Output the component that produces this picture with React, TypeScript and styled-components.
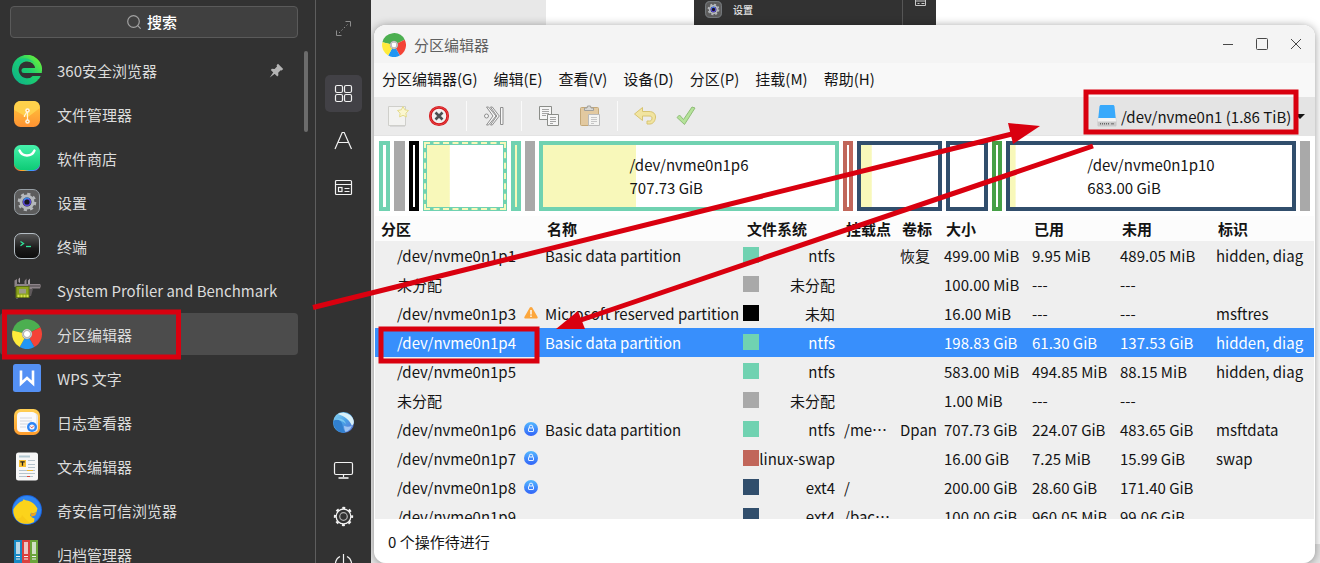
import React from "react";
import styled, { createGlobalStyle, css } from "styled-components";

const Global = createGlobalStyle`
  * { box-sizing: border-box; }
  html, body { margin: 0; padding: 0; overflow: hidden; }
  body, button, input, select {
    font-family: "Noto Sans CJK SC", "Noto Sans", sans-serif;
    font-size: 15px;
  }
  button, input, select { border: 0; background: none; padding: 0; margin: 0; color: inherit; }
  svg { display: block; flex: none; }
`;

/* ---------- colours of the file systems ---------- */
const NTFS = "#70d2b1";
const FREE = "#a9a9a9";
const UNKNOWN = "#000000";
const SWAP = "#c1665a";
const EXT4 = "#314e6c";
const FAT = "#46a046";
const USED = "#f8f8ba";

/* ---------- desktop ---------- */
const Desktop = styled.div`
  position: relative;
  display: flex;
  height: 100vh;
  overflow: hidden;
  background: #fff;
`;
const Workspace = styled.main`
  position: relative;
  flex: 1;
  min-width: 0;
  display: flex;
  flex-direction: column;
  padding: 25px 5px 0 3px;
`;
const BackPane = styled.div`
  position: absolute;
  top: 0;
  left: 0;
  width: 175px;
  height: 100%;
  background: #e8e8e8;
`;
const BackFooter = styled.div`
  position: absolute;
  right: 0;
  bottom: 0;
  width: 40px;
  height: 19px;
  background: #e4e4e4;
`;
const BackWindow = styled.div`
  position: absolute;
  top: 0;
  left: 323px;
  width: 242px;
  height: 26px;
  display: flex;
  background: #323232;
  color: #e2e2e2;
  font-size: 10px;
  font-weight: 500;
  line-height: 20px;
`;
const BackWindowMain = styled.div`
  display: flex;
  gap: 10px;
  width: 209px;
  padding-left: 10px;
  border-right: 1px solid #565656;
`;
const BackWindowRail = styled.div`
  padding-left: 12px;
`;

/* ---------- launcher ---------- */
const Launcher = styled.aside`
  position: relative;
  z-index: 1;
  flex: none;
  display: flex;
  width: 371px;
  overflow: hidden;
  background: #323232;
  color: #dcdcdc;
`;
const LauncherShade = styled.div`
  flex: none;
  width: 0;
  box-shadow: 0 0 5px 3px rgba(0, 0, 0, 0.28);
`;
const LauncherMain = styled.div`
  width: 316px;
  padding-top: 6px;
  border-right: 1px solid #5e5e5e;
`;
const Search = styled.label`
  display: flex;
  align-items: center;
  justify-content: center;
  gap: 6px;
  height: 32px;
  margin: 0 17px 0 10px;
  border: 1px solid #5a5a5a;
  border-radius: 4px;
  background: #404040;
  input {
    width: 34px;
    height: 24px;
    padding-bottom: 2px;
    color: #fff;
    font-weight: 500;
    outline: none;
  }
  input::placeholder { color: #fff; opacity: 1; }
`;
const AppArea = styled.div`
  display: flex;
  align-items: flex-start;
  gap: 6px;
  padding-top: 10px;
`;
const AppList = styled.ul`
  list-style: none;
  margin: 0;
  padding: 0;
  width: 298px;
`;
const AppItem = styled.li`
  padding: 1px 0;
`;
const AppEntry = styled.button<{ $active?: boolean }>`
  display: flex;
  align-items: center;
  gap: 15px;
  width: 100%;
  height: 42px;
  padding: 0 14px 0 12px;
  border-radius: 4px;
  text-align: left;
  background: ${(p) => (p.$active ? "#4c4c4c" : "transparent")};
`;
const AppLabel = styled.span`
  flex: 1;
  line-height: 22px;
  padding-top: 2px;
`;
const ScrollThumb = styled.div`
  width: 4px;
  height: 81px;
  margin-top: 3px;
  border-radius: 2px;
  background: #6c6c6c;
`;
const Rail = styled.nav`
  display: flex;
  flex-direction: column;
  align-items: center;
  gap: 10px;
  width: 55px;
  padding-top: 10px;
`;
const RailButton = styled.button<{ $active?: boolean; $after?: number }>`
  flex: none;
  display: flex;
  align-items: center;
  justify-content: center;
  width: 37px;
  height: 37px;
  border-radius: 5px;
  margin-bottom: ${(p) => p.$after ?? 0}px;
  background: ${(p) => (p.$active ? "#424146" : "transparent")};
`;

/* ---------- editor window ---------- */
const EditorWindow = styled.section`
  position: relative;
  flex: 1;
  min-height: 0;
  display: flex;
  flex-direction: column;
  overflow: hidden;
  border-radius: 12px;
  background: #fff;
  color: #141414;
`;
const WindowShadow = styled.div`
  position: relative;
  flex: 1;
  min-height: 0;
  display: flex;
  flex-direction: column;
  border-radius: 12px;
  box-shadow: 0 1px 10px rgba(0, 0, 0, 0.4);
`;
const TitleBar = styled.header`
  flex: none;
  display: flex;
  align-items: center;
  gap: 8px;
  height: 38px;
  padding: 2px 8px 0;
  background: #f4f4f4;
  h1 {
    flex: 1;
    margin: 0;
    padding-bottom: 2px;
    font-size: 15px;
    font-weight: 400;
    color: #606060;
  }
`;
const WindowButtons = styled.div`
  display: flex;
  gap: 12px;
  padding-bottom: 2px;
`;
const WindowButton = styled.button`
  display: flex;
  align-items: center;
  justify-content: center;
  width: 22px;
  height: 22px;
`;
const MenuBar = styled.nav`
  flex: none;
  display: flex;
  align-items: center;
  height: 34px;
  padding-bottom: 2px;
  background: #f8f8f8;
`;
const MenuItem = styled.button`
  padding: 0 8px;
  line-height: 22px;
  white-space: nowrap;
`;
const ToolBar = styled.div`
  flex: none;
  display: flex;
  align-items: center;
  height: 39px;
  padding-left: 3px;
  border-bottom: 1px solid #e4e4e4;
  background: #ebebeb;
`;
const Tool = styled.button`
  display: flex;
  align-items: center;
  justify-content: center;
  width: 41px;
  height: 34px;
`;
const Divider = styled.span`
  width: 1px;
  height: 30px;
  margin: 0 6px 0 7px;
  background: #fafafa;
`;
const DevicePicker = styled.label`
  display: flex;
  align-items: center;
  gap: 4px;
  width: 228px;
  height: 100%;
  margin-left: auto;
  padding: 0 10px 0 10px;
  background: #e4e4e4;
  select {
    appearance: none;
    width: 170px;
    height: 26px;
    outline: none;
  }
`;

/* ---------- disk map ---------- */
const DiskMap = styled.div<{ $cols: string }>`
  flex: none;
  display: grid;
  grid-template-columns: ${(p) => p.$cols};
  gap: 4px;
  height: 80px;
  padding: 5px;
`;
const Part = styled.div<{ $c: string; $solid?: boolean; $used: number; $dashed?: boolean }>`
  position: relative;
  display: flex;
  align-items: center;
  justify-content: center;
  border: 4px solid ${(p) => p.$c};
  line-height: 23px;
  white-space: nowrap;
  background: linear-gradient(${USED}, ${USED}) 0 0 / ${(p) => p.$used}% 100% no-repeat
    ${(p) => (p.$solid ? p.$c : "#fff")};
  ${(p) =>
    p.$dashed &&
    css`
      &::after {
        content: "";
        position: absolute;
        inset: -3px;
        border: 2px dashed ${USED};
      }
    `}
`;

/* ---------- partition table ---------- */
const ListPane = styled.div`
  flex: 1;
  min-height: 0;
  overflow: hidden;
  margin: 0 1px;
  background: #efefef;
`;
const PartTable = styled.table`
  width: 100%;
  table-layout: fixed;
  border-collapse: collapse;
  white-space: nowrap;
  th {
    height: 25px;
    padding: 0 0 0 4px;
    background: #fcfcfc;
    text-align: left;
    font-weight: 700;
    line-height: 22px;
  }
  th:first-child { padding-left: 6px; }
  td {
    height: 29px;
    padding: 0 0 0 2px;
    line-height: 22px;
  }
`;
const PartRow = styled.tr<{ $selected?: boolean }>`
  background: ${(p) => (p.$selected ? "#388ffc" : "transparent")};
  color: ${(p) => (p.$selected ? "#ffffff" : "inherit")};
`;
const PathCell = styled.div`
  display: flex;
  align-items: center;
  justify-content: space-between;
  height: 22px;
  padding: 0 5px 0 20px;
  svg { margin-bottom: 2px; }
`;
const FsCell = styled.div`
  display: flex;
  align-items: center;
  justify-content: space-between;
  height: 22px;
  margin-left: -2px;
  padding-right: 7px;
`;
const Swatch = styled.span<{ $c: string }>`
  width: 16px;
  height: 16px;
  margin-bottom: 1px;
  background: ${(p) => p.$c};
`;
const StatusBar = styled.footer`
  flex: none;
  height: 44px;
  padding: 0 14px;
  line-height: 46px;
`;
const Annotations = styled.svg`
  position: absolute;
  z-index: 2;
  top: 0;
  left: 0;
  pointer-events: none;
`;

/* ---------- drawings ---------- */
const DiscIcon = ({ size }: { size: number }) => (
  <svg width={size} height={size} viewBox="0 0 30 30">
    <path d="M15 15 0.5 11.5A15 15 0 0 1 28.4 8.3Z" fill="#4caf50" />
    <path d="M15 15 28.4 8.3A15 15 0 0 1 22.3 28.1Z" fill="#f44336" />
    <path d="M15 15 22.3 28.1A15 15 0 0 1 7.7 28.1Z" fill="#2196f3" />
    <path d="M15 15 7.7 28.1A15 15 0 0 1 0.5 11.5Z" fill="#ffeb3b" />
    <circle cx="15" cy="15" r="5.2" fill="#9b9b9b" />
    <circle cx="15" cy="15" r="4.2" fill="none" stroke="#e0e0e0" strokeWidth="1" />
    <circle cx="15" cy="15" r="3" fill="#fff" />
  </svg>
);

const BrowserIcon = () => (
  <svg width="30" height="30" viewBox="0 0 30 30">
    <defs>
      <linearGradient id="b1" gradientUnits="userSpaceOnUse" x1="2" y1="26" x2="27" y2="3">
        <stop offset="0" stopColor="#0db38a" />
        <stop offset="0.55" stopColor="#1fcf6d" />
        <stop offset="1" stopColor="#6bf03a" />
      </linearGradient>
    </defs>
    <path d="M26.700 16A11.700 11.700 0 1 0 23.800 22.600" fill="none" stroke="url(#b1)" strokeWidth="6.600" />
    <path d="M3.500 7.500C8 2 17 1.500 22.500 8 17 4.500 9 5 5.500 13Z" fill="#12c48a" opacity=".7" />
    <path d="M12 13h17.800v5H12a2.500 2.500 0 0 1 0-5Z" fill="url(#b1)" />
    <path d="M20 18h10v3H19Z" fill="#323232" />
    <path d="M21 21h7.700l-1.800 3.200h-7Z" fill="#1fcf6d" />
  </svg>
);

const FilesIcon = () => (
  <svg width="30" height="30" viewBox="0 0 30 30">
    <defs>
      <linearGradient id="f1" x1="0" y1="0" x2="0" y2="1">
        <stop offset="0" stopColor="#ffc93c" />
        <stop offset="1" stopColor="#ff9232" />
      </linearGradient>
    </defs>
    <rect x="2" y="2" width="26" height="26" rx="6.500" fill="url(#f1)" />
    <path d="M2.200 11C2 4.500 4.500 2 9 2h12c4.500 0 7 2.500 6.800 7L17 17.300c-1.200.8-2.500.8-3.700 0Z" fill="#ffd34f" opacity=".85" />
    <path d="M15.500 11.500v11M15.500 12l-3.500 5.500M12.500 16v2" stroke="#fff2d8" strokeWidth="1.200" fill="none" />
    <circle cx="15.500" cy="11.500" r="2.300" fill="#fff6e6" />
    <circle cx="15.500" cy="22.500" r="2.300" fill="#fff6e6" />
    <circle cx="15.500" cy="11.500" r=".8" fill="#f0a030" />
    <circle cx="15.500" cy="22.500" r=".8" fill="#f0a030" />
  </svg>
);

const StoreIcon = () => (
  <svg width="30" height="30" viewBox="0 0 30 30">
    <defs>
      <linearGradient id="s1" x1="0" y1="0" x2="0" y2="1">
        <stop offset="0" stopColor="#46f2ac" />
        <stop offset="1" stopColor="#0ecb76" />
      </linearGradient>
      <linearGradient id="s2" x1="0" y1="0" x2="1" y2="0">
        <stop offset="0.1" stopColor="#ff6a3a" />
        <stop offset="0.35" stopColor="#ffb020" />
        <stop offset="0.6" stopColor="#2aa8ff" />
        <stop offset="1" stopColor="#8a5bff" />
      </linearGradient>
    </defs>
    <rect x="2" y="3" width="26" height="25" rx="6.500" fill="url(#s2)" />
    <rect x="2" y="2" width="26" height="25" rx="6.500" fill="url(#s1)" />
    <path d="M7.500 7.500c1.500 3.500 4.500 5 7.500 5s6-1.500 7.500-5" stroke="#fff" strokeWidth="2.400" strokeLinecap="round" fill="none" />
  </svg>
);

const SettingsIcon = ({ size = 30 }: { size?: number }) => (
  <svg width={size} height={size} viewBox="0 0 30 30">
    <rect x="2.500" y="2.500" width="25" height="25" rx="6.500" fill="#5c5c5c" stroke="#98a0a6" />
    <circle cx="15" cy="15" r="8" fill="none" stroke="#b4b7ba" strokeWidth="2.600" strokeDasharray="3.140 3.140" />
    <circle cx="15" cy="15" r="6" fill="#25252b" stroke="#b4b8bc" strokeWidth="3" />
    <circle cx="15" cy="15" r="3.400" fill="#17161f" stroke="#5a49d8" strokeWidth="1.600" />
    <path d="M11.800 13.500a3.600 3.600 0 0 1 5.500-1.700" stroke="#3a8ae0" strokeWidth="1.400" fill="none" />
  </svg>
);

const TerminalIcon = () => (
  <svg width="30" height="30" viewBox="0 0 30 30">
    <defs>
      <linearGradient id="t1" x1="0" y1="0" x2="0" y2="1">
        <stop offset="0" stopColor="#565656" />
        <stop offset="0.6" stopColor="#1a1a1a" />
        <stop offset="1" stopColor="#0c0c0c" />
      </linearGradient>
    </defs>
    <rect x="2.500" y="2.500" width="25" height="25" rx="6.500" fill="url(#t1)" stroke="#b4bdc4" />
    <path d="m8.500 10.500 3 2-3 2.200" stroke="#2fe59a" strokeWidth="1.300" fill="none" />
    <path d="M14 15.500h5" stroke="#2fe59a" strokeWidth="1.300" />
  </svg>
);

const ProfilerIcon = () => (
  <svg width="30" height="30" viewBox="0 0 30 30">
    <path d="M2.500 5.500 5 4v5h7.500V6l2-2.500V9h13.500l1 1.500-1 3h-8l-2 5h-2l-1-4H7l-1 9H4V12H2.500Z" fill="#8c8388" />
    <path d="M16 10h13v2H16Z" fill="#6b6468" />
    <path d="M6.500 7V4L8 2.500V8Zm9.500 2V5.500l2-2V9Z" fill="#a79fa4" />
    <path d="M17 14h4l-2 7h-2Z" fill="#5f595c" />
    <rect x="4" y="11.500" width="13" height="11" fill="#8aa31d" stroke="#5a6d10" />
    <rect x="7" y="14" width="7" height="4.500" fill="#9b9a86" />
    <path d="M5.500 21h2M8.500 21h2M11.500 21h2M14.500 21h2" stroke="#d5e04a" strokeWidth="2.500" />
  </svg>
);

const WriterIcon = () => (
  <svg width="30" height="30" viewBox="0 0 30 30">
    <rect x="1" y="1" width="28" height="28" rx="2.500" fill="#5490f4" />
    <path d="M9 7.500V20.500l6-5.500 6 5.500V7.500" stroke="#fff" strokeWidth="2.600" fill="none" strokeLinejoin="miter" />
  </svg>
);

const LogIcon = () => (
  <svg width="30" height="30" viewBox="0 0 30 30">
    <defs>
      <linearGradient id="l1" x1="0" y1="0" x2="0" y2="1">
        <stop offset="0" stopColor="#ffd055" />
        <stop offset="1" stopColor="#ff9c2c" />
      </linearGradient>
    </defs>
    <rect x="2" y="2" width="26" height="26" rx="6.500" fill="url(#l1)" />
    <rect x="8" y="6" width="18" height="19" rx="4" fill="#e7e7ea" />
    <rect x="5" y="5" width="19" height="20" rx="4" fill="#fafafc" />
    <path d="M8 11h12M8 14h12M8 17h8M8 20h6" stroke="#d4d6dc" strokeWidth="1" />
    <circle cx="20" cy="20" r="5" fill="#2e86f7" />
    <circle cx="20" cy="20" r="2.600" fill="#eef4ff" />
    <path d="m18.500 19.500 1.300 1.400 2-2.200" stroke="#e85a4a" strokeWidth="1" fill="none" />
  </svg>
);

const TextIcon = () => (
  <svg width="30" height="30" viewBox="0 0 30 30">
    <rect x="4" y="1.500" width="22" height="28" rx="2.500" fill="#f7f7f7" />
    <path d="M16 9.500h7M16 13.500h7M16 16.500h7M7 19.500h16M7 22.500h16M7 25.500h14" stroke="#b5c3cc" strokeWidth="1" />
    <path d="M7 5.500h11" stroke="#b3c9d3" strokeWidth="2" />
    <path d="M15 19.500h6" stroke="#f0b92c" />
    <path d="M15 25.500h3" stroke="#d84a40" />
    <rect x="7" y="9" width="7" height="7" fill="#f7bf33" />
    <path d="M8.300 10.800h4.400M10.500 10.800v4" stroke="#222" strokeWidth="1.300" />
  </svg>
);

const LeopardIcon = () => (
  <svg width="30" height="30" viewBox="0 0 30 30">
    <circle cx="15" cy="15" r="15" fill="#1c62dc" />
    <circle cx="15" cy="15" r="14" fill="#2f86f2" />
    <path d="M1.500 14C4 10 7 7 10.500 6l1-1.700 2 1c3.500.2 7.500 2.200 9.500 4.700l2.500 3.500-1 3.500c-2 1.500-4 1-5.500.8l-.8 2.700c1 1.500 2.500 2.500 4.300 3l-.5 3.500C15 30.500 6 29 3 22.500 1.600 20 1 17 1.500 14Z" fill="#fcd31b" />
    <path d="M19 18c2 .5 4 .3 5.800-.8l-1.600 3.300-4 1.200Z" fill="#f4a516" />
    <path d="M10 20c2 3 5 5 8 8-6 1.500-12-2-14-5 2 1 5 1 6-3Z" fill="#f8c917" />
  </svg>
);

const ArchiveIcon = () => (
  <svg width="30" height="30" viewBox="0 0 30 30">
    <rect x="2" y="1" width="8" height="28" fill="#1789c4" />
    <rect x="10" y="1" width="8" height="28" fill="#d9403e" />
    <rect x="18" y="1" width="8" height="28" fill="#6ba43a" />
    <path d="M4 3h4v12H4ZM12 3h4v12h-4ZM20 3h4v12h-4Z" fill="#f3f3f3" opacity=".75" />
    <path d="M4 17.500h4M12 17.500h4M20 17.500h4M4 20h4M12 20h4M20 20h4" stroke="#f3f3f3" strokeWidth="1" />
  </svg>
);

const PinIcon = () => (
  <svg width="15" height="15" viewBox="0 0 15 15">
    <path d="M9 .8 14.200 6 12.600 7.500l-.9-.2-2.500 2.500.2 2.500-1.100 1.100L1.800 6.900l1.100-1.100 2.700.1L8 3.500l-.4-1.300ZM4.300 9.200l1.500 1.500L.8 14.500Z" fill="#b4b4b4" />
  </svg>
);

const line = { fill: "none", stroke: "#f2f2f2", strokeWidth: 1.2 } as const;

const ExpandIcon = () => (
  <svg width="15" height="15" viewBox="0 0 15 15" fill="none" stroke="#8d8d8d">
    <path d="M9.500 .5h5v5M.5 9.500v5h5" />
    <path d="M3 12 12.500 2.500" strokeDasharray="1.500 2" />
  </svg>
);
const GridIcon = () => (
  <svg width="19" height="19" viewBox="0 0 19 19" {...line}>
    <rect x="1.500" y="1.500" width="7" height="7" rx="1.500" />
    <rect x="10.500" y="1.500" width="7" height="7" rx="1.500" />
    <rect x="1.500" y="10.500" width="7" height="7" rx="1.500" />
    <rect x="10.500" y="10.500" width="7" height="7" rx="1.500" />
  </svg>
);
const LetterIcon = () => (
  <svg width="19" height="19" viewBox="0 0 19 19" {...line}>
    <path d="M1 18 8.200 1.500h2L17.500 18M4.500 11.500h9.500" />
  </svg>
);
const CardIcon = () => (
  <svg width="19" height="19" viewBox="0 0 19 19" {...line}>
    <rect x="1.500" y="2.500" width="16" height="14" rx="1" />
    <path d="M1.500 6.500h16M10.500 10.500h5M10.500 13.500h5" />
    <rect x="4.500" y="9.500" width="3.500" height="4" />
  </svg>
);
const GlobeIcon = () => (
  <svg width="21" height="21" viewBox="0 0 20 20">
    <defs>
      <linearGradient id="g1" x1="0" y1="0" x2="1" y2="1">
        <stop offset="0" stopColor="#8fd8f2" />
        <stop offset="0.5" stopColor="#4aa0e6" />
        <stop offset="1" stopColor="#5b6bd0" />
      </linearGradient>
    </defs>
    <circle cx="10" cy="10" r="10" fill="url(#g1)" />
    <path d="M4.500 1.800C12-1.500 18.500 3 19.700 8c.5 2.500-.5 4.500-1.700 5-2-5-6.500-9-13.500-11.200Z" fill="#d9f0f8" />
    <path d="M.2 8.500C4.500 6 8 8 9 12c.5 3 1 5 3 7.600C5 20.500-.3 15 .2 8.500Z" fill="#3180cf" />
    <path d="M2 7c5-2 9 0 10.500 4.500C9.500 8.500 6 7.500 2 7Z" fill="#7cc8f0" />
    <path d="M10.500 13c3 1.500 5 1 7.500 0-1 3-3 5-6 6-1-1.500-1.500-4-1.500-6Z" fill="#9ec4f2" />
  </svg>
);
const MonitorIcon = () => (
  <svg width="21" height="18" viewBox="0 0 21 18" {...line}>
    <rect x="1.500" y="1.500" width="18" height="12" rx="1.500" />
    <path d="M10.500 13.500V16" />
    <path d="M5.500 17h10" strokeWidth="1.600" />
  </svg>
);
const GearIcon = () => (
  <svg width="21" height="21" viewBox="0 0 20 20" {...line}>
    <circle cx="10" cy="10" r="8.200" strokeWidth="2" strokeDasharray="2.800 3.640" strokeDashoffset="1.400" />
    <circle cx="10" cy="10" r="7" />
    <circle cx="10" cy="10" r="3.600" stroke="#b0b0b0" />
  </svg>
);
const PowerIcon = () => (
  <svg width="19" height="19" viewBox="0 0 19 19" {...line}>
    <path d="M9.500 0v9M6 2.500a8 8 0 1 0 7 0" />
  </svg>
);

const NewIcon = () => (
  <svg width="24" height="24" viewBox="0 0 24 24">
    <path d="M2.500 2.500h17v19h-17Z" fill="#f3f3f1" stroke="#cfcfcb" />
    <path d="M4 22.500h15" stroke="#d8d8d8" />
    <path d="m17 2.500 1.800 3.300 3.700.7-2.600 2.700.5 3.700-3.400-1.600-3.400 1.600.5-3.700-2.600-2.700 3.800-.7Z" fill="#fbf7d0" stroke="#e5dc8c" strokeLinejoin="round" />
  </svg>
);
const DeleteIcon = () => (
  <svg width="22" height="22" viewBox="0 0 22 22">
    <circle cx="11" cy="11" r="8.700" fill="#f0f0f0" stroke="#d4181c" strokeWidth="2.800" />
    <circle cx="11" cy="11" r="8.900" fill="none" stroke="#f06060" strokeWidth=".6" />
    <path d="m7.500 7.500 7 7m0-7-7 7" stroke="#4c5052" strokeWidth="2.600" />
  </svg>
);
const ResizeIcon = () => (
  <svg width="22" height="22" viewBox="0 0 22 22" fill="#f7f7f7" stroke="#8f8f8f">
    <circle cx="3.500" cy="11" r="2" />
    <path d="M3.500 2h2l7.500 9-7.500 9h-2L10 11Z" />
    <path d="M17.500 2.500h2.500v17h-2.500Z" />
    <path d="M7.500 2h1.800l7 9-7 9H7.500l6.300-9Z" />
  </svg>
);
const CopyIcon = () => (
  <svg width="22" height="22" viewBox="0 0 22 22" fill="#f6f6f6" stroke="#8b8d89">
    <path d="M1.500 1.500h12v13h-12Z" />
    <path d="M4 4.500h7M4 6.500h7M4 8.500h7M4 10.500h4" stroke="#a4a4a4" />
    <path d="M9.500 9.500h11v11h-11Z" />
    <path d="M12 12.500h6M12 14.500h6M12 16.500h6M12 18.500h3" stroke="#a4a4a4" />
  </svg>
);
const PasteIcon = () => (
  <svg width="22" height="22" viewBox="0 0 22 22">
    <rect x="1.500" y="2.500" width="18" height="18" rx="1" fill="#e2c9a0" stroke="#c4a878" />
    <path d="M5.500 5.500V3H8l.5-2h3l.5 2h2.500v2.500Z" fill="#d8d8d6" stroke="#a0a09c" />
    <path d="M9.500 9.500h11v11h-11Z" fill="#f4f4f2" stroke="#bababa" />
    <path d="M12 12.500h6M12 14.500h6M12 16.500h6M12 18.500h3" stroke="#c6c6c6" />
  </svg>
);
const UndoIcon = () => (
  <svg width="24" height="20" viewBox="0 0 24 20">
    <path d="M1.500 8 9.500 1.500v4H16c4.500 0 6.500 2.500 6.500 5.500S20.500 18 17 18h-3v-3h2.500c2 0 2.500-1.500 2.500-3s-1-2-3-2H9.500v4.500Z" fill="#f1e4a0" stroke="#d8c470" strokeLinejoin="round" />
  </svg>
);
const ApplyIcon = () => (
  <svg width="22" height="22" viewBox="0 0 22 22">
    <path d="m2 12.500 2.500-2.500 4 4.500L17 2l3 1L9.500 19.500Z" fill="#b5e39a" stroke="#90bd78" strokeLinejoin="round" />
  </svg>
);
const DriveIcon = () => (
  <svg width="20" height="22" viewBox="0 0 20 22">
    <path d="M1.300 12.500h17.400l.8 3.500v4c0 .8-.5 1.200-1.200 1.200H1.700C1 21.200.500 20.800.500 20v-4Z" fill="#f3f3f3" stroke="#cfcfcf" strokeWidth=".6" />
    <path d="M.7 16.500h18.600v3.700c0 .6-.4 1-1 1H1.700c-.6 0-1-.4-1-1Z" fill="#c9c9c9" />
    <path d="M2.500 1.500C2.600.6 3.200 0 4 0h12c.8 0 1.400.6 1.500 1.500L18.700 13H1.300Z" fill="#38a9fb" />
    <path d="M3 18.800h9" stroke="#666" strokeWidth="1.400" strokeDasharray="1 1" />
    <path d="M14 18.800h3" stroke="#888" strokeWidth="1.600" />
  </svg>
);
const WarnIcon = () => (
  <svg width="14" height="14" viewBox="0 0 14 14">
    <path d="M5.800 1.600c.5-.9 1.900-.9 2.400 0l5.400 9.300c.4.800-.1 1.600-1 1.600H1.400c-.9 0-1.400-.8-1-1.600Z" fill="#fca63c" />
    <path d="M7 4v4.500M7 9.500V11" stroke="#fff" strokeWidth="1.400" />
  </svg>
);
const LockIcon = () => (
  <svg width="14" height="14" viewBox="0 0 14 14">
    <defs>
      <linearGradient id="k1" x1="0" y1="0" x2="0" y2="1">
        <stop offset="0" stopColor="#54b8ff" />
        <stop offset="1" stopColor="#3163f8" />
      </linearGradient>
    </defs>
    <circle cx="7" cy="7" r="7" fill="url(#k1)" />
    <rect x="4.500" y="6" width="5" height="3.500" rx=".5" fill="none" stroke="#fff" strokeWidth=".9" />
    <path d="M5.300 6V4.800a1.700 1.700 0 0 1 3.400 0V6" fill="none" stroke="#fff" strokeWidth=".9" />
  </svg>
);

/* ---------- data ---------- */
const apps: { name: string; icon: React.ReactNode; pinned?: boolean; active?: boolean }[] = [
  { name: "360安全浏览器", icon: <BrowserIcon />, pinned: true },
  { name: "文件管理器", icon: <FilesIcon /> },
  { name: "软件商店", icon: <StoreIcon /> },
  { name: "设置", icon: <SettingsIcon /> },
  { name: "终端", icon: <TerminalIcon /> },
  { name: "System Profiler and Benchmark", icon: <ProfilerIcon /> },
  { name: "分区编辑器", icon: <DiscIcon size={30} />, active: true },
  { name: "WPS 文字", icon: <WriterIcon /> },
  { name: "日志查看器", icon: <LogIcon /> },
  { name: "文本编辑器", icon: <TextIcon /> },
  { name: "奇安信可信浏览器", icon: <LeopardIcon /> },
  { name: "归档管理器", icon: <ArchiveIcon /> },
];

const menus = ["分区编辑器(G)", "编辑(E)", "查看(V)", "设备(D)", "分区(P)", "挂载(M)", "帮助(H)"];

const parts: { w: number; c: string; solid?: boolean; used?: number; dashed?: boolean; label?: [string, string] }[] = [
  { w: 11, c: NTFS },
  { w: 11, c: FREE, solid: true },
  { w: 10, c: UNKNOWN },
  { w: 84, c: NTFS, used: 30, dashed: true },
  { w: 10, c: NTFS, used: 100 },
  { w: 10, c: FREE, solid: true },
  { w: 300, c: NTFS, used: 32, label: ["/dev/nvme0n1p6", "707.73 GiB"] },
  { w: 10, c: SWAP },
  { w: 85, c: EXT4, used: 14 },
  { w: 42, c: EXT4 },
  { w: 10, c: FAT },
  { w: 290, c: EXT4, used: 2, label: ["/dev/nvme0n1p10", "683.00 GiB"] },
  { w: 10, c: FREE, solid: true },
];
const partColumns = parts.map((p) => `minmax(0, ${p.w}fr)`).join(" ");

const columns: [string, number | undefined][] = [
  ["分区", 168],
  ["名称", 200],
  ["文件系统", 99],
  ["挂载点", 56],
  ["卷标", 44],
  ["大小", 88],
  ["已用", 88],
  ["未用", 96],
  ["标识", undefined],
];

type Row = {
  path: string; mark?: "warn" | "lock"; name?: string; color: string; fs: string; mount?: string;
  label?: string; size: string; used: string; free: string; flags?: string; selected?: boolean;
};
const rows: Row[] = [
  { path: "/dev/nvme0n1p1", name: "Basic data partition", color: NTFS, fs: "ntfs", label: "恢复", size: "499.00 MiB", used: "9.95 MiB", free: "489.05 MiB", flags: "hidden, diag" },
  { path: "未分配", color: FREE, fs: "未分配", size: "100.00 MiB", used: "---", free: "---" },
  { path: "/dev/nvme0n1p3", mark: "warn", name: "Microsoft reserved partition", color: UNKNOWN, fs: "未知", size: "16.00 MiB", used: "---", free: "---", flags: "msftres" },
  { path: "/dev/nvme0n1p4", name: "Basic data partition", color: NTFS, fs: "ntfs", size: "198.83 GiB", used: "61.30 GiB", free: "137.53 GiB", flags: "hidden, diag", selected: true },
  { path: "/dev/nvme0n1p5", color: NTFS, fs: "ntfs", size: "583.00 MiB", used: "494.85 MiB", free: "88.15 MiB", flags: "hidden, diag" },
  { path: "未分配", color: FREE, fs: "未分配", size: "1.00 MiB", used: "---", free: "---" },
  { path: "/dev/nvme0n1p6", mark: "lock", name: "Basic data partition", color: NTFS, fs: "ntfs", mount: "/me⋯", label: "Dpan", size: "707.73 GiB", used: "224.07 GiB", free: "483.65 GiB", flags: "msftdata" },
  { path: "/dev/nvme0n1p7", mark: "lock", color: SWAP, fs: "linux-swap", size: "16.00 GiB", used: "7.25 MiB", free: "15.99 GiB", flags: "swap" },
  { path: "/dev/nvme0n1p8", mark: "lock", color: EXT4, fs: "ext4", mount: "/", size: "200.00 GiB", used: "28.60 GiB", free: "171.40 GiB" },
  { path: "/dev/nvme0n1p9", color: EXT4, fs: "ext4", mount: "/bac⋯", size: "100.00 GiB", used: "960.05 MiB", free: "99.06 GiB" },
];

export default function App() {
  return (
    <Desktop lang="zh-CN">
      <Global />
      <Launcher>
        <LauncherMain>
          <Search>
            <svg width="14" height="14" viewBox="0 0 14 14" fill="none" stroke="#a2a2a2" strokeWidth="1.200">
              <circle cx="6.500" cy="6.500" r="5.800" />
              <path d="m10.700 10.700 3 3" />
            </svg>
            <input type="text" placeholder="搜索" aria-label="搜索" />
          </Search>
          <AppArea>
            <AppList>
              {apps.map((a) => (
                <AppItem key={a.name}>
                  <AppEntry type="button" $active={a.active}>
                    {a.icon}
                    <AppLabel>{a.name}</AppLabel>
                    {a.pinned && <PinIcon />}
                  </AppEntry>
                </AppItem>
              ))}
            </AppList>
            <ScrollThumb />
          </AppArea>
        </LauncherMain>
        <Rail>
          <RailButton type="button" aria-label="展开" $after={18}><ExpandIcon /></RailButton>
          <RailButton type="button" aria-label="全部" $active><GridIcon /></RailButton>
          <RailButton type="button" aria-label="字母"><LetterIcon /></RailButton>
          <RailButton type="button" aria-label="分类" $after={188}><CardIcon /></RailButton>
          <RailButton type="button" aria-label="用户"><GlobeIcon /></RailButton>
          <RailButton type="button" aria-label="计算机"><MonitorIcon /></RailButton>
          <RailButton type="button" aria-label="设置"><GearIcon /></RailButton>
          <RailButton type="button" aria-label="电源"><PowerIcon /></RailButton>
        </Rail>
      </Launcher>
      <LauncherShade />

      <Workspace>
        <BackPane />
        <BackFooter />
        <BackWindow>
          <BackWindowMain>
            <SettingsIcon size={19} />
            <span>设置</span>
          </BackWindowMain>
          <BackWindowRail>
            <svg width="11" height="6" viewBox="0 0 11 6" fill="none" stroke="#c8c8c8">
              <path d="M.5 0v5.500h10V0M.5 1h10M2.500 3.500h2M6.500 3.500h3" />
            </svg>
          </BackWindowRail>
        </BackWindow>

        <WindowShadow>
          <EditorWindow>
            <TitleBar>
              <DiscIcon size={24} />
              <h1>分区编辑器</h1>
              <WindowButtons>
                <WindowButton type="button" aria-label="最小化">
                  <svg width="12" height="12" viewBox="0 0 12 12" stroke="#484848"><path d="M1 6.500h10" /></svg>
                </WindowButton>
                <WindowButton type="button" aria-label="最大化">
                  <svg width="12" height="12" viewBox="0 0 12 12" fill="none" stroke="#484848"><rect x=".5" y=".5" width="11" height="11" rx="1" /></svg>
                </WindowButton>
                <WindowButton type="button" aria-label="关闭">
                  <svg width="12" height="12" viewBox="0 0 12 12" stroke="#484848"><path d="m1 1 10 10M11 1 1 11" /></svg>
                </WindowButton>
              </WindowButtons>
            </TitleBar>
            <MenuBar>
              {menus.map((m) => (
                <MenuItem type="button" key={m}>{m}</MenuItem>
              ))}
            </MenuBar>
            <ToolBar>
              <Tool type="button" aria-label="新建"><NewIcon /></Tool>
              <Tool type="button" aria-label="删除"><DeleteIcon /></Tool>
              <Divider />
              <Tool type="button" aria-label="调整大小"><ResizeIcon /></Tool>
              <Divider />
              <Tool type="button" aria-label="复制"><CopyIcon /></Tool>
              <Tool type="button" aria-label="粘贴"><PasteIcon /></Tool>
              <Divider />
              <Tool type="button" aria-label="撤销"><UndoIcon /></Tool>
              <Tool type="button" aria-label="应用"><ApplyIcon /></Tool>
              <DevicePicker>
                <DriveIcon />
                <select aria-label="设备" defaultValue="nvme0n1">
                  <option value="nvme0n1">/dev/nvme0n1 (1.86 TiB)</option>
                </select>
                <svg width="10" height="5" viewBox="0 0 10 5"><path d="M0 0h10L5 5Z" fill="#141414" /></svg>
              </DevicePicker>
            </ToolBar>
            <DiskMap $cols={partColumns}>
              {parts.map((p, i) => (
                <Part key={i} $c={p.c} $solid={p.solid} $used={p.used ?? 0} $dashed={p.dashed}>
                  {p.label && (
                    <div>
                      <div>{p.label[0]}</div>
                      <div>{p.label[1]}</div>
                    </div>
                  )}
                </Part>
              ))}
            </DiskMap>
            <ListPane>
              <PartTable>
                <colgroup>
                  {columns.map(([name, w]) => (
                    <col key={name} width={w} />
                  ))}
                </colgroup>
                <thead>
                  <tr>
                    {columns.map(([name]) => (
                      <th key={name} scope="col">{name}</th>
                    ))}
                  </tr>
                </thead>
                <tbody>
                  {rows.map((r, i) => (
                    <PartRow key={i} $selected={r.selected}>
                      <td>
                        <PathCell>
                          <span>{r.path}</span>
                          {r.mark === "warn" && <WarnIcon />}
                          {r.mark === "lock" && <LockIcon />}
                        </PathCell>
                      </td>
                      <td>{r.name}</td>
                      <td>
                        <FsCell>
                          <Swatch $c={r.color} />
                          <span>{r.fs}</span>
                        </FsCell>
                      </td>
                      <td>{r.mount}</td>
                      <td>{r.label}</td>
                      <td>{r.size}</td>
                      <td>{r.used}</td>
                      <td>{r.free}</td>
                      <td>{r.flags}</td>
                    </PartRow>
                  ))}
                </tbody>
              </PartTable>
            </ListPane>
            <StatusBar>0 个操作待进行</StatusBar>
          </EditorWindow>
        </WindowShadow>
      </Workspace>

      <Annotations width="1320" height="563" viewBox="0 0 1320 563" fill="none" stroke="#d9000f" strokeWidth="5">
        <rect x="4.500" y="312" width="174" height="45" />
        <rect x="1086" y="92" width="210" height="40" />
        <rect x="381" y="329" width="156" height="32" />
        <path d="M313 307.500 1016 133" />
        <path d="M1093 146 578 321" />
        <path d="m1040 126-27 18-5-21Z" fill="#d9000f" stroke="none" />
        <path d="m556 329 22-18 7 18Z" fill="#d9000f" stroke="none" />
      </Annotations>
    </Desktop>
  );
}
